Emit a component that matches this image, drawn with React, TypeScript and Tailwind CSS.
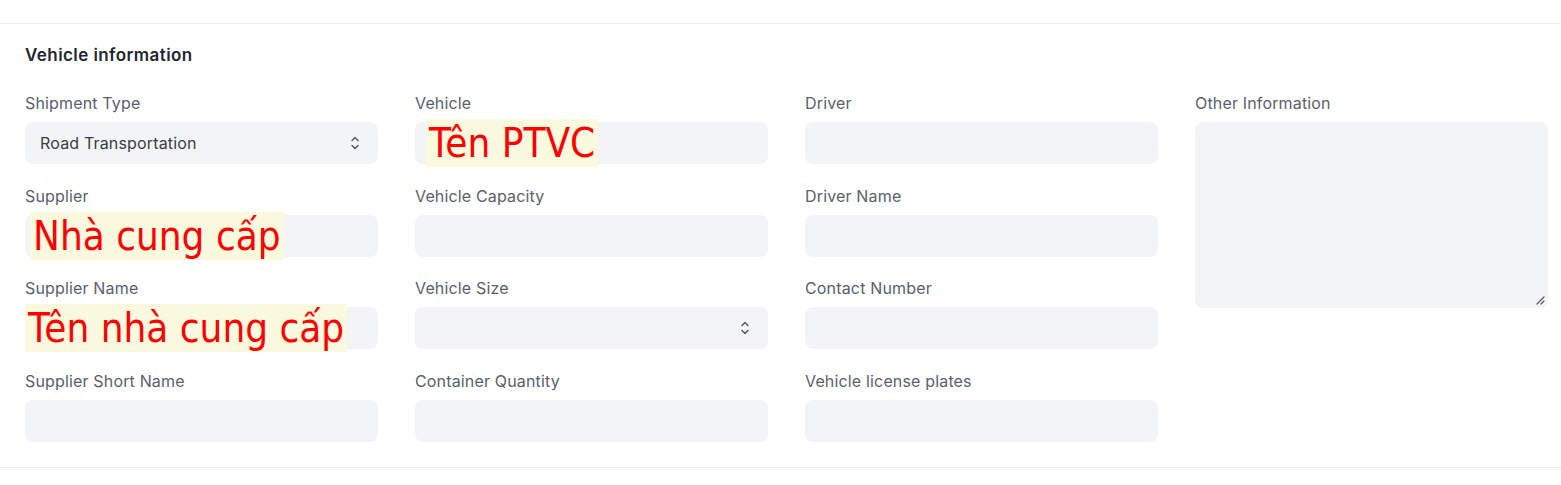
import React from "react";

const Chevrons = () => (
  <svg width="10" height="16" viewBox="0 0 10 16" fill="none" stroke="#4b5563" strokeWidth="1.4" strokeLinecap="round" strokeLinejoin="round">
    <path d="M2 5.5 L5 2.5 L8 5.5" />
    <path d="M2 10.5 L5 13.5 L8 10.5" />
  </svg>
);

const Field = ({ label, value, select, note, noteLeft }: { label: string; value?: string; select?: boolean; note?: string; noteLeft?: number }) => (
  <div className="flex flex-col">
    <div className="text-[16px] tracking-[0.01em] leading-[20px] text-[#59616b] mb-[9px]">{label}</div>
    <div className="relative h-[42px] rounded-[8px] bg-[#f3f4f6] flex items-center justify-between pl-[15px] pr-[18px]">
      <span className="text-[16px] tracking-[0.01em] text-[#383e44]">{value}</span>
      {select && <Chevrons />}
      {note && (
        <div
          className="absolute top-[-3px] h-[48px] bg-[#fbfade] text-[#ff0000] text-[40px] leading-[48px] px-[3px] whitespace-nowrap"
          style={{ left: noteLeft ?? 0, fontFamily: '"DejaVu Sans Condensed", "DejaVu Sans", sans-serif' }}
        >
          {note}
        </div>
      )}
    </div>
  </div>
);

export default function App() {
  return (
    <div className="w-[1561px] h-[485px] bg-white" style={{ fontFamily: 'Inter, "Noto Sans", sans-serif' }}>
      <div className="h-[23px]" />
      <div className="border-t border-b border-[#ededed] pl-[25px] pr-[13px] pt-[21px] pb-[25px]">
        <div className="text-[17px] tracking-[0.025em] leading-[20px] font-semibold text-[#1f272e] mb-[28px]">Vehicle information</div>
        <div className="grid grid-cols-4 gap-x-[37px]">
          <div className="flex flex-col gap-y-[21.6px]">
            <Field label="Shipment Type" value="Road Transportation" select />
            <Field label="Supplier" note="Nhà cung cấp" noteLeft={5} />
            <Field label="Supplier Name" note="Tên nhà cung cấp" noteLeft={0} />
            <Field label="Supplier Short Name" />
          </div>
          <div className="flex flex-col gap-y-[21.6px]">
            <Field label="Vehicle" note="Tên PTVC" noteLeft={11} />
            <Field label="Vehicle Capacity" />
            <Field label="Vehicle Size" select />
            <Field label="Container Quantity" />
          </div>
          <div className="flex flex-col gap-y-[21.6px]">
            <Field label="Driver" />
            <Field label="Driver Name" />
            <Field label="Contact Number" />
            <Field label="Vehicle license plates" />
          </div>
          <div className="flex flex-col">
            <div className="text-[16px] tracking-[0.01em] leading-[20px] text-[#59616b] mb-[9px]">Other Information</div>
            <div className="relative h-[186px] rounded-[8px] bg-[#f3f4f6]">
              <svg className="absolute right-[3px] bottom-[3px]" width="10" height="10" viewBox="0 0 10 10" stroke="#555" strokeWidth="1.2" strokeLinecap="round">
                <path d="M2 9 L9 2" />
                <path d="M6 9 L9 6" />
              </svg>
            </div>
          </div>
        </div>
      </div>
    </div>
  );
}
